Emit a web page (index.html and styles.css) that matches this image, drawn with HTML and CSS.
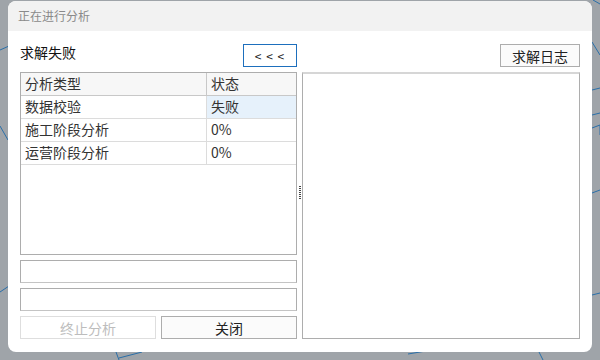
FILE: index.html
```html
<!DOCTYPE html>
<html lang="zh-CN">
<head>
    <meta charset="UTF-8">
    <title>正在进行分析</title>
    <link rel="stylesheet" href="styles.css">
</head>
<body>
    <svg class="mesh" width="600" height="360" viewBox="0 0 600 360">
        <g stroke="#2a6fa8" stroke-width="1" fill="none">
            <path d="M0 50 L9 46"/>
            <path d="M0 126 L8 140"/>
            <path d="M0 292 L9 286"/>
            <path d="M116 352 L119 360"/>
            <path d="M119 358 L142 352"/>
            <path d="M408 354 L432 350"/>
            <path d="M539 352 L543 360"/>
            <path d="M592 42 L600 55"/>
            <path d="M592 90 L600 88"/>
            <path d="M592 115 L600 113"/>
            <path d="M592 128 L600 125 L600 135"/>
            <path d="M592 193 L600 190"/>
            <path d="M592 295 L600 293"/>
            <path d="M593 0 L600 4"/>
        </g>
    </svg>

    <div class="dialog">
        <div class="titlebar">正在进行分析</div>
        <div class="content">
            <div class="left">
                <div class="toprow">
                    <span class="status">求解失败</span>
                    <button class="btn btn-back">&lt; &lt; &lt;</button>
                </div>
                <div class="grid">
                    <div class="row head">
                        <div class="cell c-type">分析类型</div>
                        <div class="cell">状态</div>
                    </div>
                    <div class="row">
                        <div class="cell c-type">数据校验</div>
                        <div class="cell sel">失败</div>
                    </div>
                    <div class="row">
                        <div class="cell c-type">施工阶段分析</div>
                        <div class="cell">0%</div>
                    </div>
                    <div class="row">
                        <div class="cell c-type">运营阶段分析</div>
                        <div class="cell">0%</div>
                    </div>
                </div>
                <div class="field"></div>
                <div class="field"></div>
                <div class="actions">
                    <button class="btn btn-off">终止分析</button>
                    <button class="btn">关闭</button>
                </div>
            </div>
            <div class="splitter"><span class="grip"></span></div>
            <div class="right">
                <div class="toprow toprow-end">
                    <button class="btn btn-log">求解日志</button>
                </div>
                <div class="log"></div>
            </div>
        </div>
    </div>
</body>
</html>
```

FILE: styles.css
```css
body {
    margin: 0;
    width: 600px;
    height: 360px;
    background-color: #9fa4a9;
    font-family: "Noto Sans CJK SC", "Noto Sans", sans-serif;
    font-size: 14px;
    color: #222;
    position: relative;
    overflow: hidden;
}

.mesh { position: absolute; left: 0; top: 0; }

.dialog {
    position: relative;
    margin: 1px 8px 0 8px;
    width: 584px;
    height: 351px;
    background: #fff;
    border-radius: 8px;
    overflow: hidden;
    display: flex;
    flex-direction: column;
}

.titlebar {
    height: 30px;
    line-height: 29px;
    background: #f2f2f2;
    color: #8a8a8a;
    font-size: 12px;
    padding-left: 10px;
    flex-shrink: 0;
}

.content {
    flex: 1;
    display: flex;
    padding: 13px 12px 13px 12px;
}

.left {
    width: 277px;
    display: flex;
    flex-direction: column;
    gap: 5px;
}

.right {
    width: 278px;
    display: flex;
    flex-direction: column;
    gap: 5px;
}

.toprow {
    height: 23px;
    display: flex;
    justify-content: space-between;
    align-items: flex-start;
}

.toprow-end { justify-content: flex-end; }

.status {
    color: #111;
    font-size: 14px;
    line-height: 16px;
}

.btn {
    box-sizing: border-box;
    height: 23px;
    border: 1px solid #adadad;
    background: #fbfbfb;
    font-family: inherit;
    font-size: 14px;
    color: #222;
    padding: 0;
    line-height: 20px;
}

.btn-back {
    width: 54px;
    border-color: #1d6fbd;
    background: #fff;
    font-size: 12px;
    letter-spacing: 1px;
}

.btn-log { width: 80px; }

.btn-off {
    border-color: #dedede;
    color: #bdbdbd;
    background: #fff;
}

.grid {
    box-sizing: border-box;
    height: 183px;
    border: 1px solid #adadad;
}

.row {
    display: flex;
    height: 23px;
    box-sizing: border-box;
    border-bottom: 1px solid #dcdcdc;
}

.row.head {
    background: #f7f7f7;
    border-bottom-color: #c8c8c8;
}

.cell {
    flex: 1;
    padding-left: 4px;
    line-height: 21px;
    color: #333;
}

.c-type {
    flex: none;
    width: 181px;
    border-right: 1px solid #dcdcdc;
}

.head .c-type { border-right-color: #c8c8c8; }

.sel { background: #e6f1fb; }

.field {
    box-sizing: border-box;
    height: 23px;
    border: 1px solid #adadad;
    border-bottom-color: #c4c4c4;
}

.field:first-of-type { margin-top: 1px; }

.actions {
    display: flex;
    gap: 5px;
}

.actions .btn { flex: 1; }

.splitter {
    width: 5px;
    display: flex;
    justify-content: center;
    padding-top: 142px;
}

.grip {
    width: 2px;
    height: 13px;
    background: repeating-linear-gradient(#444 0 1px, transparent 1px 2px);
}

.log {
    flex: 1;
    box-sizing: border-box;
    border: 1px solid #adadad;
    border-top: 2px solid #d6d6d6;
}
```
